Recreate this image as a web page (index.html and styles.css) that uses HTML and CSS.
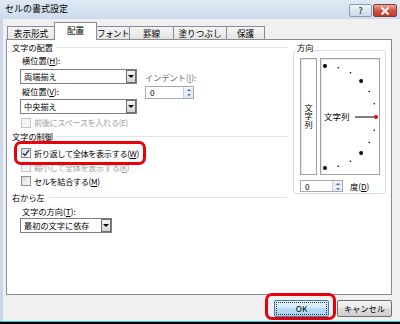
FILE: index.html
```html
<!DOCTYPE html>
<html lang="ja">
<head>
    <meta charset="UTF-8">
    <title>セルの書式設定</title>
    <link rel="stylesheet" href="styles.css">
</head>
<body>

<div class="window">
    <div class="titlebar">
        <span class="title">セルの書式設定</span>
        <div class="caption-buttons">
            <span class="cap-btn help">?</span>
            <span class="cap-btn close">
                <svg width="10" height="8" viewBox="0 0 10 8"><path d="M1.5 0.5 L8.5 7.5 M8.5 0.5 L1.5 7.5" stroke="#fff" stroke-width="2"/></svg>
            </span>
        </div>
    </div>

    <div class="client">
        <div class="tabs">
            <div class="tab t1">表示形式</div>
            <div class="tab t2 active">配置</div>
            <div class="tab t3">フォント</div>
            <div class="tab t4">罫線</div>
            <div class="tab t5">塗りつぶし</div>
            <div class="tab t6">保護</div>
        </div>

        <div class="panel">
            <div class="left-col">
                <div class="group-title"><span>文字の配置</span></div>
                <div class="indent">
                    <div class="align-block">
                        <div class="col-a">
                            <div class="label">横位置(<u>H</u>):</div>
                            <div class="combo combo-wide"><span class="combo-text">両端揃え</span><span class="combo-btn"></span></div>
                            <div class="label label-gap">縦位置(<u>V</u>):</div>
                            <div class="combo combo-wide combo-gap"><span class="combo-text">中央揃え</span><span class="combo-btn"></span></div>
                        </div>
                        <div class="col-b">
                            <div class="label dim">インデント(<u>I</u>):</div>
                            <div class="spin spin-indent">
                                <span class="spin-val">0</span>
                                <span class="spin-btns"><span class="up"></span><span class="down"></span></span>
                            </div>
                        </div>
                    </div>
                    <div class="check check-first disabled"><span class="box"></span><span>前後にスペースを入れる(E)</span></div>
                </div>

                <div class="group-title gt-2"><span>文字の制御</span></div>
                <div class="indent checks">
                    <div class="check">
                        <span class="box">
                            <svg width="8" height="8" viewBox="0 0 8 8"><path d="M1 4.2 L3 6.4 L7 1" fill="none" stroke="#243c7c" stroke-width="1.4"/></svg>
                        </span>
                        <span>折り返して全体を表示する(<u>W</u>)</span>
                    </div>
                    <div class="check disabled"><span class="box"></span><span>縮小して全体を表示する(<u>K</u>)</span></div>
                    <div class="check"><span class="box"></span><span>セルを結合する(<u>M</u>)</span></div>
                </div>

                <div class="group-title gt-3"><span>右から左</span></div>
                <div class="indent">
                    <div class="label label-dir">文字の方向(<u>T</u>):</div>
                    <div class="combo combo-short"><span class="combo-text">最初の文字に依存</span><span class="combo-btn"></span></div>
                </div>
            </div>

            <fieldset class="orient">
                <legend>方向</legend>
                <div class="orient-boxes">
                    <div class="vtext"><span>文字列</span></div>
                    <div class="dial">
                        <svg width="58" height="115" viewBox="0 0 58 115">
                            <circle cx="4" cy="7" r="2"/>
                            <circle cx="17.2" cy="8.7" r="0.8"/>
                            <circle cx="29.5" cy="13.8" r="0.8"/>
                            <circle cx="40.1" cy="21.9" r="2"/>
                            <circle cx="48.2" cy="32.5" r="0.8"/>
                            <circle cx="53.3" cy="44.8" r="0.8"/>
                            <circle cx="53.3" cy="71.2" r="0.8"/>
                            <circle cx="48.2" cy="83.5" r="0.8"/>
                            <circle cx="40.1" cy="94.1" r="2"/>
                            <circle cx="29.5" cy="102.2" r="0.8"/>
                            <circle cx="17.2" cy="107.3" r="0.8"/>
                            <circle cx="4" cy="109" r="2"/>
                            <text x="3" y="61.3" class="dial-text">文字列</text>
                            <line x1="34" y1="58" x2="53" y2="58" stroke="#000" stroke-width="1"/>
                            <circle cx="55" cy="58" r="2" fill="#e40000"/>
                        </svg>
                    </div>
                </div>
                <div class="degree-row">
                    <div class="spin spin-degree">
                        <span class="spin-val">0</span>
                        <span class="spin-btns"><span class="up"></span><span class="down"></span></span>
                    </div>
                    <span class="degree-label">度(<u>D</u>)</span>
                </div>
            </fieldset>
        </div>

        <div class="footer">
            <button class="btn btn-ok"><span>OK</span></button>
            <button class="btn">キャンセル</button>
        </div>

        <div class="highlight hl-wrap"></div>
        <div class="highlight hl-ok"></div>
    </div>
</div>

</body>
</html>
```

FILE: styles.css
```css
* {
    box-sizing: border-box;
}
html, body {
    margin: 0;
}
body {
    width: 400px;
    height: 324px;
    overflow: hidden;
    background: #000;
    font-family: "Noto Sans CJK JP", "Noto Sans", sans-serif;
    font-size: 8.2px;
    line-height: 11px;
    color: #000;
}
u {
    text-decoration: underline;
}

.window {
    height: 322px;
    display: flex;
    flex-direction: column;
    background: #c9d7e9;
    border-bottom: 1px solid #3ec3ef;
}

/* title bar */
.titlebar {
    height: 19px;
    flex: none;
    display: flex;
    justify-content: space-between;
    align-items: flex-start;
    background: linear-gradient(#dfe9f5, #cddbeb);
}
.title {
    font-size: 9px;
    line-height: 11px;
    margin: 3px 0 0 5px;
}
.caption-buttons {
    display: flex;
    gap: 1px;
    margin: 4px 3px 0 0;
}
.cap-btn {
    height: 13px;
    border-radius: 2px;
    display: flex;
    align-items: center;
    justify-content: center;
}
.help {
    width: 23px;
    border: 1px solid #8d9cb1;
    background: linear-gradient(#eef3f9, #cbd8e7);
    color: #4d5a6e;
    font-size: 9px;
    font-weight: bold;
}
.close {
    width: 24px;
    border: 1px solid #8a3b30;
    background: linear-gradient(#e9a99b, #cf5546 50%, #c1392b);
}

/* client area */
.client {
    flex: 1;
    margin-left: 3px;
    padding: 0 8px 0 3px;
    background: #f0f0f0;
    display: flex;
    flex-direction: column;
    position: relative;
}

.tabs {
    height: 20px;
    flex: none;
    display: flex;
    align-items: flex-end;
    padding-left: 2px;
}
.tab {
    height: 13px;
    margin-left: -1px;
    border: 1px solid #898c95;
    border-bottom: none;
    background: linear-gradient(#f5f5f5, #e4e4e4);
    text-align: center;
    font-size: 8.6px;
    line-height: 12px;
    white-space: nowrap;
}
.tab.active {
    height: 18px;
    margin-bottom: -1px;
    background: #fff;
    position: relative;
    z-index: 1;
    line-height: 15px;
}
.t1 { width: 48px; }
.t2 { width: 43px; }
.t3 { width: 34px; letter-spacing: -0.6px; }
.t4 { width: 45px; }
.t5 { width: 54px; }
.t6 { width: 39px; }

.panel {
    height: 256px;
    flex: none;
    border: 1px solid #898c95;
    background: #fff;
    display: flex;
    gap: 6px;
    padding: 2px 5px 0 5px;
}

.left-col {
    width: 275px;
}
.group-title {
    display: flex;
    align-items: center;
    height: 11px;
}
.group-title::after {
    content: "";
    flex: 1;
    height: 1px;
    margin-left: 4px;
    background: #dde3ea;
}
.gt-2 {
    margin-top: 3px;
}
.gt-3 {
    margin-top: 4px;
}

.indent {
    margin-left: 8px;
}
.align-block {
    display: flex;
    gap: 8px;
    margin-top: 2px;
}
.label {
    height: 11px;
    padding-left: 2px;
    white-space: nowrap;
}
.label-gap {
    margin-top: 2px;
}
.label.dim {
    color: #6d6d6d;
    padding-left: 0;
}
.col-b {
    margin-top: 17px;
}

.combo {
    display: flex;
    height: 15px;
    border: 1px solid #7a7e86;
    background: #fff;
}
.combo-wide {
    width: 117px;
    margin-top: 3px;
}
.combo-gap {
    margin-top: 2px;
}
.combo-short {
    width: 92px;
    margin-top: 1px;
}
.combo-text {
    flex: 1;
    padding-left: 3px;
    line-height: 13px;
    white-space: nowrap;
}
.combo-btn {
    width: 10px;
    border: 1px solid #6e6e6e;
    background: linear-gradient(#f6f6f6, #d4d4d4);
    display: flex;
    align-items: center;
    justify-content: center;
}
.combo-btn::after {
    content: "";
    border-left: 3px solid transparent;
    border-right: 3px solid transparent;
    border-top: 3px solid #000;
}

.spin {
    display: flex;
    border: 1px solid #a5a9b1;
    background: #fff;
}
.spin-indent {
    width: 49px;
    height: 13px;
    margin-top: 3px;
}
.spin-degree {
    width: 43px;
    height: 12px;
}
.spin-val {
    flex: 1;
    padding-left: 4px;
    line-height: 10px;
}
.spin-btns {
    width: 10px;
    display: flex;
    flex-direction: column;
    border-left: 1px solid #c8d0da;
}
.spin-btns span {
    flex: 1;
    background: linear-gradient(#f4f7fb, #dce4ee);
    display: flex;
    align-items: center;
    justify-content: center;
}
.spin-btns .up::after {
    content: "";
    border-left: 2.5px solid transparent;
    border-right: 2.5px solid transparent;
    border-bottom: 2.5px solid #4a6ea9;
}
.spin-btns .down::after {
    content: "";
    border-left: 2.5px solid transparent;
    border-right: 2.5px solid transparent;
    border-top: 2.5px solid #4a6ea9;
}

.check {
    display: flex;
    align-items: center;
    gap: 3px;
    height: 14px;
    padding-left: 1px;
    white-space: nowrap;
    letter-spacing: -0.4px;
}
.check-first {
    height: 11px;
    margin-top: 3px;
}
.checks {
    margin-top: 4px;
}
.box {
    width: 10px;
    height: 10px;
    flex: none;
    border: 1px solid #8e8f8f;
    background: linear-gradient(135deg, #dadada, #fbfbfb);
    display: flex;
    align-items: center;
    justify-content: center;
}
.check.disabled {
    color: #a3a3a3;
}
.check.disabled .box {
    border-color: #c6c6c6;
    background: #f4f4f4;
}
.label-dir {
    margin-top: 3px;
}

/* orientation group */
.orient {
    align-self: flex-start;
    width: 93px;
    margin: 0;
    padding: 0 5px 1px 6px;
    border: 1px solid #d5dfe5;
    border-radius: 3px;
    min-width: 0;
}
.orient legend {
    margin-left: -4px;
    padding: 0 1px 5px;
    line-height: 11px;
}
.orient-boxes {
    display: flex;
    gap: 3px;
}
.vtext, .dial {
    height: 117px;
    border: 1px solid #a0a0a0;
    box-shadow: inset 1px 1px 0 #e6e6e6;
    background: #fff;
}
.vtext {
    width: 17px;
    display: flex;
    align-items: center;
    justify-content: center;
}
.vtext span {
    writing-mode: vertical-rl;
    line-height: 10px;
}
.dial {
    width: 60px;
}
.dial svg {
    display: block;
}
.dial-text {
    font-size: 8.5px;
}
.degree-row {
    display: flex;
    align-items: center;
    gap: 7px;
    margin-top: 5px;
}

/* footer */
.footer {
    flex: 1;
    display: flex;
    justify-content: flex-end;
    align-items: flex-start;
    gap: 8px;
    padding-top: 5px;
}
.btn {
    width: 55px;
    height: 17px;
    padding: 0;
    font-family: inherit;
    font-size: 8.2px;
    line-height: 11px;
    color: #000;
    border: 1px solid #707070;
    border-radius: 2px;
    background: linear-gradient(#f2f2f2, #ebebeb 50%, #dddddd 50%, #cfcfcf);
}
.btn-ok {
    border-color: #3c7fb1;
    background: linear-gradient(#e5f3fc, #cfe8f9 50%, #b6dcf6 50%, #a8d3f1);
    padding: 1px;
}
.btn-ok span {
    display: block;
    height: 13px;
    border: 1px dotted #333;
    line-height: 11px;
}

/* red call-outs */
.highlight {
    position: absolute;
    border: 3px solid #e8000b;
    border-radius: 7px;
}
.hl-wrap {
    left: 11px;
    top: 122px;
    width: 132px;
    height: 24px;
}
.hl-ok {
    left: 262px;
    top: 274px;
    width: 71px;
    height: 27px;
}
```
